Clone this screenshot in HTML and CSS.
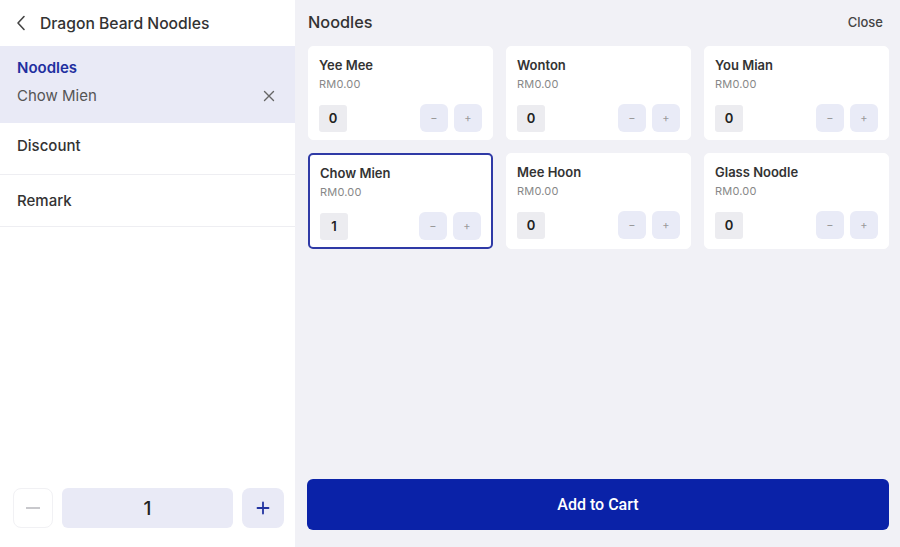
FILE: index.html
```html
<!DOCTYPE html>
<html>
<head>
<meta charset="utf-8">
<link rel="stylesheet" href="styles.css">
</head>
<body>
<div class="app">
  <aside class="side">
    <div class="side-head">
      <svg class="chev" width="10" height="16" viewBox="0 0 10 16"><polyline points="8,1.5 2,8 8,14.5" fill="none" stroke="#444" stroke-width="1.6" stroke-linecap="round" stroke-linejoin="round"/></svg>
      <span>Dragon Beard Noodles</span>
    </div>
    <div class="sel">
      <div class="sel-title">Noodles</div>
      <div class="sel-item">
        <span>Chow Mien</span>
        <svg width="12" height="12" viewBox="0 0 12 12"><path d="M1.5 1.5 L10.5 10.5 M10.5 1.5 L1.5 10.5" stroke="#666" stroke-width="1.4" stroke-linecap="round"/></svg>
      </div>
    </div>
    <div class="row discount">Discount</div>
    <div class="row remark">Remark</div>
    <div class="spacer"></div>
    <div class="qty">
      <div class="qbtn minus"><span class="dash"></span></div>
      <div class="qval">1</div>
      <div class="qbtn plus">
        <svg width="14" height="14" viewBox="0 0 14 14"><path d="M7 1.5 V12.5 M1.5 7 H12.5" stroke="#2233a0" stroke-width="1.8" stroke-linecap="round"/></svg>
      </div>
    </div>
  </aside>
  <main class="main">
    <div class="main-head">
      <span class="title">Noodles</span>
      <span class="close">Close</span>
    </div>
    <div class="grid">
      <div class="card"><div class="name">Yee Mee</div><div class="price">RM0.00</div><div class="ctl"><span class="cnt">0</span><span class="btns"><span class="b">−</span><span class="b">+</span></span></div></div>
      <div class="card"><div class="name">Wonton</div><div class="price">RM0.00</div><div class="ctl"><span class="cnt">0</span><span class="btns"><span class="b">−</span><span class="b">+</span></span></div></div>
      <div class="card"><div class="name">You Mian</div><div class="price">RM0.00</div><div class="ctl"><span class="cnt">0</span><span class="btns"><span class="b">−</span><span class="b">+</span></span></div></div>
      <div class="card active"><div class="name">Chow Mien</div><div class="price">RM0.00</div><div class="ctl"><span class="cnt">1</span><span class="btns"><span class="b">−</span><span class="b">+</span></span></div></div>
      <div class="card"><div class="name">Mee Hoon</div><div class="price">RM0.00</div><div class="ctl"><span class="cnt">0</span><span class="btns"><span class="b">−</span><span class="b">+</span></span></div></div>
      <div class="card"><div class="name">Glass Noodle</div><div class="price">RM0.00</div><div class="ctl"><span class="cnt">0</span><span class="btns"><span class="b">−</span><span class="b">+</span></span></div></div>
    </div>
    <div class="spacer"></div>
    <button class="cart">Add to Cart</button>
  </main>
</div>
</body>
</html>
```
FILE: styles.css
```css
* { box-sizing: border-box; }
html, body { margin: 0; padding: 0; }
body {
  font-family: Inter, "Noto Sans", sans-serif;
  width: 900px;
  height: 547px;
  overflow: hidden;
  color: #333;
}
.app { display: flex; height: 547px; }
.side {
  width: 295px;
  background: #fff;
  display: flex;
  flex-direction: column;
}
.side-head {
  height: 46px;
  display: flex;
  align-items: center;
  padding-left: 16px;
  gap: 14px;
  font-size: 15.7px;
  font-weight: 500;
  color: #333;
}
.chev { display: block; }
.sel {
  background: #e9eaf6;
  height: 77px;
  padding: 12px 17px 0 17px;
}
.sel-title {
  font-size: 15px;
  font-weight: 600;
  color: #1f2fa0;
  line-height: 20px;
}
.sel-item {
  margin-top: 8px;
  display: flex;
  justify-content: space-between;
  align-items: center;
  font-size: 15px;
  color: #555;
  line-height: 20px;
  padding-right: 3px;
}
.sel-item svg { display: block; }
.row {
  height: 52px;
  border-bottom: 1px solid #eeeef2;
  display: flex;
  align-items: center;
  padding: 0 17px;
  font-size: 15px;
  font-weight: 500;
  color: #333;
}
.row.discount { padding-bottom: 7px; }
.row.remark { padding-bottom: 0; }
.spacer { flex: 1; }
.qty {
  display: flex;
  gap: 9px;
  padding: 0 11px 19px 13px;
  height: 59px;
}
.qbtn {
  width: 40px;
  height: 40px;
  border-radius: 8px;
  display: flex;
  align-items: center;
  justify-content: center;
}
.qbtn.minus { background: #fff; border: 1px solid #f1f1f4; }
.qbtn.plus { background: #e9eaf6; width: 42px; }
.dash { width: 14px; height: 1.5px; background: #c8c8cc; display: block; }
.qval {
  flex: 1;
  background: #e9eaf6;
  border-radius: 6px;
  height: 40px;
  display: flex;
  align-items: center;
  justify-content: center;
  font-size: 19px;
  font-weight: 500;
  color: #222;
}
.main {
  flex: 1;
  background: #f1f1f6;
  display: flex;
  flex-direction: column;
  padding: 0 11px 17px 12px;
}
.main-head {
  height: 46px;
  display: flex;
  align-items: center;
  justify-content: space-between;
  padding: 0 6px 2px 1px;
}
.title { font-size: 16.3px; font-weight: 500; color: #333; }
.close { font-size: 13px; font-weight: 500; color: #444; }
.grid {
  display: grid;
  grid-template-columns: repeat(3, 1fr);
  gap: 13px 13px;
  padding-left: 1px;
}
.card {
  background: #fff;
  border: 1px solid #fff;
  border-radius: 5px;
  padding: 9px 10px 7px 10px;
}
.card.active { border: 2px solid #2f3aa6; }
.name { font-size: 13px; font-weight: 600; line-height: 18px; color: #333; }
.price { font-size: 11px; color: #888; line-height: 14px; margin-top: 3px; letter-spacing: 0.2px; }
.ctl {
  margin-top: 13px;
  display: flex;
  justify-content: space-between;
  align-items: center;
}
.cnt {
  width: 28px;
  height: 27px;
  background: #ececf0;
  border-radius: 3px;
  display: flex;
  align-items: center;
  justify-content: center;
  font-size: 13px;
  font-weight: 600;
  color: #222;
}
.btns { display: flex; gap: 6px; }
.b {
  width: 28px;
  height: 28px;
  border-radius: 6px;
  background: #e9ebf7;
  display: flex;
  align-items: center;
  justify-content: center;
  font-size: 11px;
  color: #999;
}
.cart {
  height: 51px;
  border: none;
  border-radius: 6px;
  background: #0a22a8;
  color: #fff;
  font-family: Roboto, Inter, sans-serif;
  font-size: 16px;
  font-weight: 500;
  width: 582px;
}
```
